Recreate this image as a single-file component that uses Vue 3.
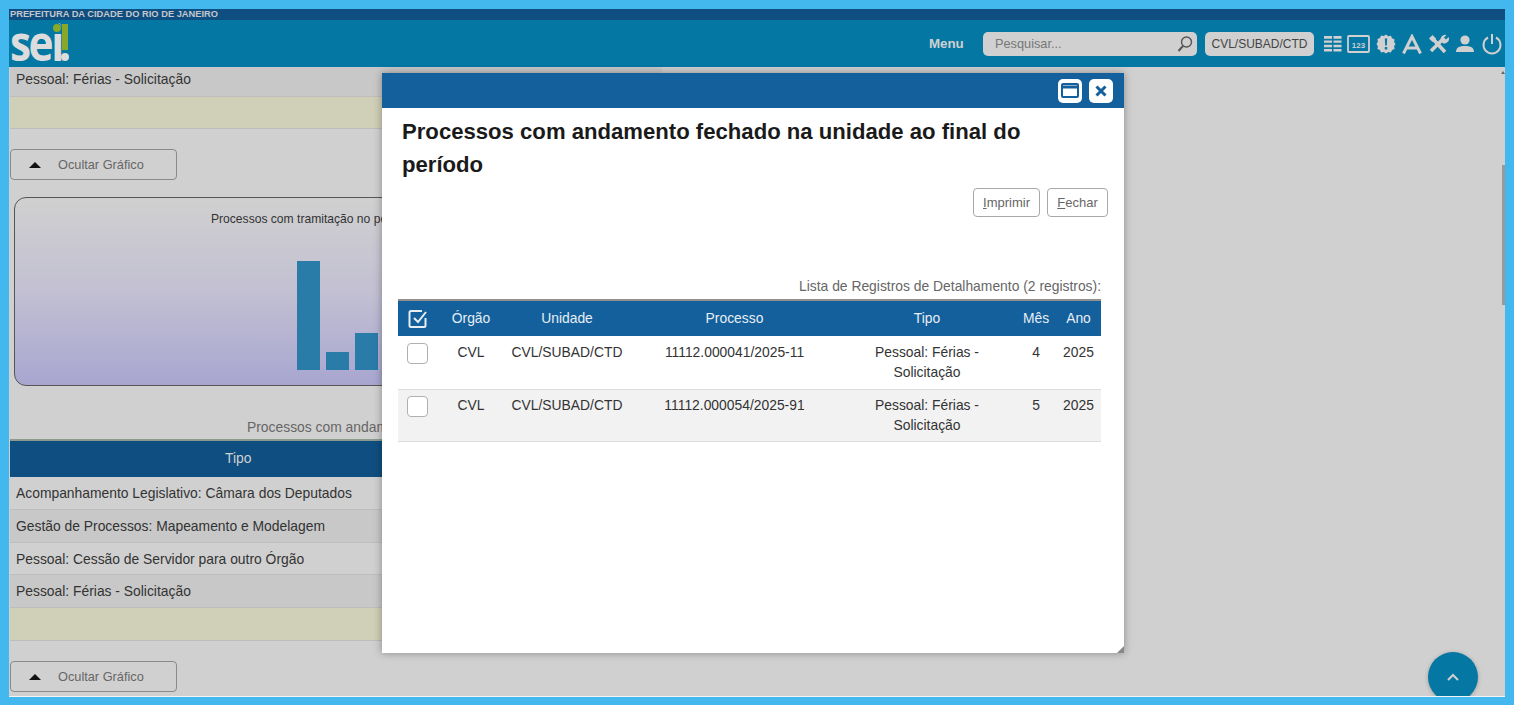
<script setup>
const bgRows = [
  { label: 'Acompanhamento Legislativo: Câmara dos Deputados', dark: false },
  { label: 'Gestão de Processos: Mapeamento e Modelagem', dark: true },
  { label: 'Pessoal: Cessão de Servidor para outro Órgão', dark: false },
  { label: 'Pessoal: Férias - Solicitação', dark: true },
]
const records = [
  { org: 'CVL', unit: 'CVL/SUBAD/CTD', proc: '11112.000041/2025-11', mes: '4', ano: '2025' },
  { org: 'CVL', unit: 'CVL/SUBAD/CTD', proc: '11112.000054/2025-91', mes: '5', ano: '2025' },
]
const bars = [109, 18, 37]
</script>

<template>
  <div class="frame">
    <div class="screen">
      <div class="gov">PREFEITURA DA CIDADE DO RIO DE JANEIRO</div>
      <header class="top">
        <div class="logo"><span class="logo-text">sei</span><i class="dot"></i><i class="bang"></i><i class="bang-dot"></i></div>
        <span class="menu">Menu</span>
        <div class="search">
          <span>Pesquisar...</span>
          <svg width="18" height="18" viewBox="0 0 18 18" fill="none" stroke="#555" stroke-width="1.4"><circle cx="10.5" cy="7" r="5"/><path d="M7 11 2.5 16" stroke-width="2"/></svg>
        </div>
        <div class="unit">CVL/SUBAD/CTD</div>
        <div class="icons">
          <svg class="list-icon" width="18" height="20" viewBox="0 0 19 20" fill="#d0d0d0"><path d="M0 1.500h8.500v3H0zM10 1.500h8.500v3H10zM0 6.200h8.500v2.600H0zM10 6.200h8.500v2.600H10zM0 10.700h8.500v2.600H0zM10 10.700h8.500v2.600H10zM0 15.200h8.500v2.600H0zM10 15.200h8.500v2.600H10z"/></svg>
          <svg width="23" height="20" viewBox="0 0 23 20" fill="none"><rect x="1" y="2" width="21" height="16" rx="1" stroke="#d0d0d0" stroke-width="1.8"/><text x="11.500" y="13.500" text-anchor="middle" font-size="8" font-weight="700" font-family="Liberation Sans, sans-serif" fill="#d0d0d0">123</text></svg>
          <svg width="20" height="20" viewBox="0 0 20 20"><path fill="#d0d0d0" d="M10 0.500l2.200 1.700 2.700-.5 1.200 2.500 2.500 1.200-.5 2.700L19.500 10l-1.400 2.200.5 2.700-2.500 1.200-1.200 2.500-2.700-.5L10 19.500l-2.200-1.400-2.700.5-1.200-2.500-2.500-1.200.5-2.700L.5 10l1.400-2.200-.5-2.700 2.500-1.200 1.200-2.500 2.700.5z"/><path fill="#0477a3" d="M8.800 4.500h2.400l-.4 7h-1.600zM8.800 13h2.400v2.400H8.800z"/></svg>
          <svg width="20" height="20" viewBox="0 0 20 20" fill="none" stroke="#d0d0d0" stroke-width="3"><path d="M1.500 19.500 10 2.500l8.500 17M5 14h10"/></svg>
          <svg width="21" height="20" viewBox="0 0 21 20" fill="none" stroke="#d0d0d0"><path d="M5.500 5.500 17 18" stroke-width="3.600"/><path d="M14.500 5.500 3 17" stroke-width="3.600"/><path d="M1 4.500 4.500 1 8 4.500 4.500 8z" fill="#d0d0d0" stroke="none"/><path d="M13 7a4.500 4.500 0 0 1 5.500-6l-2.500 2.500 2 2 2.500-2.500A4.500 4.500 0 0 1 14.500 9z" fill="#d0d0d0" stroke="none"/></svg>
          <svg width="20" height="20" viewBox="0 0 20 20" fill="#d0d0d0"><circle cx="10" cy="6" r="4.600"/><path d="M1 18c0-4.500 3.500-6 9-6s9 1.500 9 6z"/></svg>
          <svg width="22" height="22" viewBox="0 0 22 22" fill="none" stroke="#d0d0d0" stroke-width="2"><path d="M7 4.500a8.500 8.500 0 1 0 8 0"/><path d="M11 1v10"/></svg>
        </div>
      </header>

      <main class="page">
        <div class="bg-row narrow dark">Pessoal: Férias - Solicitação</div>
        <div class="bg-total narrow"></div>
        <button class="toggle"><i class="tri"></i>Ocultar Gráfico</button>
        <section class="chart">
          <p>Processos com tramitação no período</p>
          <div class="bars">
            <span v-for="(b, i) in bars" :key="i" class="bar" :style="{ height: b + 'px' }"></span>
          </div>
        </section>
        <div class="caption">Processos com andamento fechado na unidade</div>
        <div class="bg-table narrow">
          <div class="bg-head"><span>Tipo</span></div>
          <div v-for="r in bgRows" :key="r.label" class="bg-row" :class="{ dark: r.dark }">{{ r.label }}</div>
          <div class="bg-total"></div>
        </div>
        <button class="toggle"><i class="tri"></i>Ocultar Gráfico</button>
      </main>

      <div class="scroll-arrow"></div>
      <div class="scroll-thumb"></div>
      <div class="to-top">
        <svg width="14" height="9" viewBox="0 0 14 9" fill="none" stroke="#d0d0d0" stroke-width="2"><path d="M2 7l5-5 5 5"/></svg>
      </div>
    </div>

    <div class="modal">
      <div class="modal-bar">
        <button class="win-btn" aria-label="Maximizar">
          <svg width="18" height="15" viewBox="0 0 18 15" fill="none"><rect x="1" y="1" width="16" height="13" rx="1" stroke="#13609c" stroke-width="2"/><path d="M1 4h16" stroke="#13609c" stroke-width="3"/></svg>
        </button>
        <button class="win-btn" aria-label="Fechar">
          <svg width="12" height="12" viewBox="0 0 12 12" fill="none" stroke="#13609c" stroke-width="3"><path d="M1.500 1.500l9 9M10.500 1.500l-9 9"/></svg>
        </button>
      </div>
      <div class="modal-body">
        <h1>Processos com andamento fechado na unidade ao final do período</h1>
        <div class="actions">
          <button class="act"><u>I</u>mprimir</button>
          <button class="act close"><u>F</u>echar</button>
        </div>
        <div class="list-title">Lista de Registros de Detalhamento (2 registros):</div>
        <table class="records">
          <colgroup>
            <col style="width: 41px" /><col style="width: 64px" /><col style="width: 128px" /><col style="width: 207px" /><col style="width: 178px" /><col style="width: 40px" /><col style="width: 45px" />
          </colgroup>
          <thead>
            <tr>
              <th class="chk-head">
                <svg width="20" height="20" viewBox="0 0 20 20" fill="none" stroke="#e8eef4" stroke-width="2"><path d="M17.500 9v7.500a1.500 1.500 0 0 1-1.500 1.500H3a1.500 1.500 0 0 1-1.500-1.500V3.500A1.500 1.500 0 0 1 3 2h11"/><path d="M6 9l4 4 8-10"/></svg>
              </th>
              <th>Órgão</th><th>Unidade</th><th>Processo</th><th>Tipo</th><th>Mês</th><th>Ano</th>
            </tr>
          </thead>
          <tbody>
            <tr v-for="r in records" :key="r.proc">
              <td class="chk-cell"><span class="box"></span></td>
              <td>{{ r.org }}</td>
              <td>{{ r.unit }}</td>
              <td>{{ r.proc }}</td>
              <td class="tipo">Pessoal: Férias - Solicitação</td>
              <td>{{ r.mes }}</td>
              <td>{{ r.ano }}</td>
            </tr>
          </tbody>
        </table>
      </div>
      <i class="grip"></i>
    </div>
  </div>
</template>

<style>
html, body { margin: 0; overflow: hidden; }
</style>

<style scoped>
.frame {
  position: relative;
  width: 1514px;
  height: 705px;
  box-sizing: border-box;
  padding: 9px 9px 8px 9px;
  background: #42b8ee;
  font-family: "Liberation Sans", Arial, sans-serif;
  overflow: hidden;
}
.screen {
  position: relative;
  height: 100%;
  background: #d0d0d0;
  border-bottom: 1px solid #f4f4f4;
  box-sizing: border-box;
  overflow: hidden;
}
.gov {
  height: 11px;
  background: #0f4e80;
  color: #c4c8cc;
  font-size: 9.300px;
  font-weight: 700;
  line-height: 10px;
  padding-left: 1px;
  white-space: nowrap;
  overflow: hidden;
}
.top {
  height: 47px;
  background: #0477a3;
  display: flex;
  align-items: center;
  color: #d0d0d0;
}
.logo {
  position: relative;
  width: 60px;
  height: 47px;
  margin-left: 1px;
}
.logo-text {
  position: absolute;
  left: 0;
  top: 2px;
  font-family: "Open Sans", sans-serif;
  font-size: 50px;
  font-weight: 700;
  letter-spacing: -3px;
  line-height: 40px;
  color: #dcdcdc;
  transform: scaleX(0.85);
  transform-origin: left center;
}
.dot {
  position: absolute;
  left: 43px;
  top: 4px;
  width: 8px;
  height: 8px;
  border-radius: 50%;
  background: #88a82a;
  box-shadow: 0 0 0 1px #0477a3;
}
.bang {
  position: absolute;
  left: 52px;
  top: 4px;
  width: 6px;
  height: 26px;
  background: #88a82a;
}
.bang-dot {
  position: absolute;
  left: 51px;
  top: 33px;
  width: 8px;
  height: 8px;
  border-radius: 50%;
  background: #dcdcdc;
}
.menu {
  margin-left: 859px;
  width: 54px;
  font-size: 13.300px;
  font-weight: 700;
}
.search {
  width: 214px;
  height: 24px;
  box-sizing: border-box;
  padding: 0 3px 0 12px;
  background: #d0d0d0;
  border-radius: 5px;
  display: flex;
  align-items: center;
  justify-content: space-between;
  color: #777;
  font-size: 12.750px;
}
.unit {
  margin-left: 8px;
  width: 109px;
  height: 24px;
  line-height: 24px;
  text-align: center;
  background: #d0d0d0;
  border-radius: 5px;
  color: #444;
  font-size: 12px;
}
.icons {
  margin-left: 10px;
  display: flex;
  align-items: center;
  gap: 6px;
}
.list-icon { margin-right: -1px; }
.page {
  display: flex;
  flex-direction: column;
  align-items: flex-start;
  padding-left: 1px;
  color: #333;
  font-size: 13.860px;
}
.narrow { width: 652px; box-sizing: border-box; }
.bg-row {
  height: 32.750px;
  box-sizing: border-box;
  padding-left: 6px;
  line-height: 32px;
  background: #d0d0d0;
  border-bottom: 1px solid #bdbdbd;
  white-space: nowrap;
}
.bg-row.dark { background: #c8c8c8; }
.page > .bg-row { height: 30px; line-height: 24px; }
.bg-total {
  height: 32px;
  background: #d0d0b8;
  border-bottom: 1px solid #bdbdbd;
}
.toggle {
  width: 167px;
  height: 31px;
  display: flex;
  align-items: center;
  padding: 0 0 0 18px;
  background: transparent;
  border: 1px solid #8a8a8a;
  border-radius: 4px;
  color: #666;
  font: 12.750px "Liberation Sans", Arial, sans-serif;
  margin-top: 20px;
}
.tri {
  width: 0;
  height: 0;
  border-left: 6px solid transparent;
  border-right: 6px solid transparent;
  border-bottom: 6px solid #111;
  margin-right: 17px;
}
.chart {
  box-sizing: border-box;
  width: 624px;
  height: 189px;
  margin: 17px 0 0 4px;
  border: 1px solid #555;
  border-top-width: 1.500px;
  border-radius: 12px;
  background: linear-gradient(#d0d0d0 0%, #c2c0d2 50%, #a8a6d0 100%);
  display: flex;
  flex-direction: column;
}
.chart p {
  margin: 14px 0 0 196px;
  font-size: 12.100px;
  color: #333;
  white-space: nowrap;
}
.bars {
  margin: 35px 0 0 282px;
  display: flex;
  align-items: flex-end;
  gap: 6px;
  height: 109px;
}
.bar {
  width: 23px;
  background: #2a7ca8;
}
.caption {
  width: 652px;
  box-sizing: border-box;
  margin-top: 33px;
  padding-left: 237px;
  color: #666;
  height: 16px;
  line-height: 16px;
  white-space: nowrap;
}
.bg-table { margin-top: 4px; border-top: 2px solid #8e9a8e; }
.bg-head {
  height: 36px;
  background: #0f4e80;
  color: #d0d0d0;
  line-height: 35px;
  padding-left: 215px;
}
.modal {
  position: absolute;
  left: 382px;
  top: 73px;
  width: 742px;
  height: 580px;
  background: #fff;
  box-shadow: 0 0 8px rgba(0, 0, 0, 0.35);
}
.modal-bar {
  height: 35px;
  background: #13609c;
  display: flex;
  justify-content: flex-end;
  align-items: center;
  gap: 7px;
  padding-right: 11px;
  box-sizing: border-box;
}
.win-btn {
  width: 24px;
  height: 24px;
  padding: 0;
  border: 0;
  border-radius: 5px;
  background: #fff;
  display: flex;
  align-items: center;
  justify-content: center;
}
.modal-body {
  padding: 7px 0 0 16px;
  color: #222;
}
.modal-body h1 {
  margin: 0 0 0 4px;
  width: 640px;
  font-size: 22.140px;
  font-weight: 700;
  line-height: 33px;
  color: #1a1a1a;
}
.actions {
  display: flex;
  justify-content: flex-end;
  gap: 7px;
  margin: 7px 16px 0 0;
}
.act {
  height: 29px;
  padding: 0 9px;
  background: #fff;
  border: 1px solid #a8a8a8;
  border-radius: 4px;
  color: #666;
  font: 13px "Liberation Sans", Arial, sans-serif;
}
.act.close { width: 61px; padding: 0; }
.list-title {
  width: 703px;
  margin-top: 59px;
  text-align: right;
  color: #666;
  font-size: 13.860px;
  line-height: 20px;
}
.records {
  margin-top: 3px;
  width: 703px;
  table-layout: fixed;
  border-collapse: collapse;
  border-top: 2px solid #909090;
  font-size: 13.860px;
  text-align: center;
}
.records th {
  height: 36px;
  padding: 0 0 2px;
  box-sizing: border-box;
  background: #13609c;
  color: #e8eef4;
  font-weight: 400;
}
.records .chk-head { text-align: left; padding-left: 10px; }
.chk-head svg { display: block; margin-top: 2px; }
.records td {
  height: 52px;
  box-sizing: border-box;
  padding: 6px 0 0;
  vertical-align: top;
  line-height: 20px;
  color: #333;
  border-bottom: 1px solid #ddd;
}
.records tbody tr:first-child td { height: 53px; }
.records tbody tr:nth-child(2) td { background: #f2f2f2; padding-top: 5px; }
.records .tipo { padding-left: 14px; padding-right: 14px; }
.records .chk-cell { text-align: left; padding: 7px 0 0 9px; }
.records tbody tr:nth-child(2) .chk-cell { padding-top: 6px; }
.box {
  display: block;
  width: 19px;
  height: 19px;
  background: #fff;
  border: 1px solid #b0b0b0;
  border-radius: 4px;
}
.grip {
  position: absolute;
  right: 0;
  bottom: 0;
  width: 0;
  height: 0;
  border-left: 7px solid transparent;
  border-bottom: 7px solid #888;
}
.scroll-arrow {
  position: absolute;
  right: 0;
  top: 62px;
  width: 0;
  height: 0;
  border-left: 2px solid transparent;
  border-right: 2px solid transparent;
  border-bottom: 3px solid #666;
}
.scroll-thumb {
  position: absolute;
  right: 0;
  top: 156px;
  width: 3px;
  height: 140px;
  background: #999;
}
.to-top {
  position: absolute;
  left: 1419px;
  top: 643px;
  width: 50px;
  height: 50px;
  border-radius: 50%;
  background: #0477a3;
  box-shadow: 0 1px 4px rgba(0, 0, 0, 0.25);
  display: flex;
  align-items: center;
  justify-content: center;
}
</style>
